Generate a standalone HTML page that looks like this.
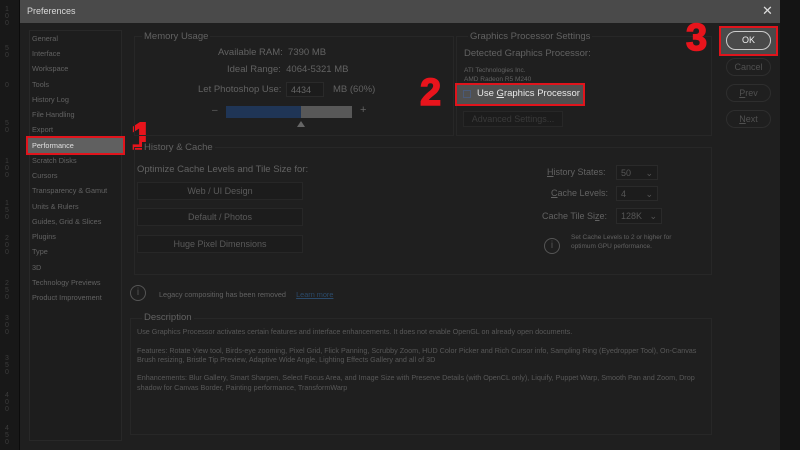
<!DOCTYPE html>
<html><head><style>
*{margin:0;padding:0;box-sizing:border-box}
body{width:800px;height:450px;background:#141414;font-family:"Liberation Sans",sans-serif;position:relative;overflow:hidden;color:#626262;font-size:8px}
.a{position:absolute}
.ruler{left:0;top:0;width:20px;height:450px;background:#181818;border-right:1px solid #0c0c0c}
.ruler span{position:absolute;left:4px;font-size:7px;color:#3c3c3c;line-height:7px;width:6px;text-align:center}
.dlg{left:20px;top:0;width:760px;height:450px;background:#1f1f1f}
.title{left:20px;top:0;width:760px;height:23px;background:#4a4a4a;color:#d8d8d8;font-size:9px;padding:6px 7px}
.side{left:29px;top:30px;width:93px;height:411px;border:1px solid #282828;background:#1d1d1d}
.item{position:absolute;left:32px;font-size:7.3px;color:#626262}
.grp{border:1px solid #272727}
.btn{background:#1c1c1c;border:1px solid #272727;color:#5a5a5a;font-size:9px;text-align:center}
.rb{border-radius:10px;border:1px solid #2e2e2e;color:#505050;font-size:9px;text-align:center;line-height:16px}
.red{border:2px solid #e0141c}
.num{color:#e8141c;font-weight:bold;font-size:38px;font-family:"Liberation Sans",sans-serif;-webkit-text-stroke:1.5px #e8141c}
.sel{background:#1c1c1c;border:1px solid #2a2a2a;color:#565656;font-size:9px;padding:2px 4px}
</style></head><body>
<div class="a ruler">
<span style="top:6px">1<br>0<br>0</span><span style="top:45px">5<br>0</span><span style="top:82px">0</span><span style="top:120px">5<br>0</span><span style="top:158px">1<br>0<br>0</span><span style="top:200px">1<br>5<br>0</span><span style="top:235px">2<br>0<br>0</span><span style="top:280px">2<br>5<br>0</span><span style="top:315px">3<br>0<br>0</span><span style="top:355px">3<br>5<br>0</span><span style="top:392px">4<br>0<br>0</span><span style="top:425px">4<br>5<br>0</span>
</div>
<div class="a dlg"></div>
<div class="a title">Preferences</div>
<div class="a" style="left:762px;top:3px;color:#ddd;font-size:13px">✕</div>
<div class="a side"></div>
<div class="item" style="top:34px">General</div>
<div class="item" style="top:49px">Interface</div>
<div class="item" style="top:64px">Workspace</div>
<div class="item" style="top:80px">Tools</div>
<div class="item" style="top:95px">History Log</div>
<div class="item" style="top:110px">File Handling</div>
<div class="item" style="top:125px">Export</div>
<div class="a red" style="left:26px;top:136px;width:99px;height:19px;background:#606060"></div>
<div class="item" style="top:141px;color:#e0e0e0">Performance</div>
<div class="item" style="top:156px">Scratch Disks</div>
<div class="item" style="top:171px">Cursors</div>
<div class="item" style="top:186px">Transparency &amp; Gamut</div>
<div class="item" style="top:202px">Units &amp; Rulers</div>
<div class="item" style="top:217px">Guides, Grid &amp; Slices</div>
<div class="item" style="top:232px">Plugins</div>
<div class="item" style="top:247px">Type</div>
<div class="item" style="top:263px">3D</div>
<div class="item" style="top:278px">Technology Previews</div>
<div class="item" style="top:293px">Product Improvement</div>
<div class="a num" style="left:131px;top:116px">1</div>

<div class="a grp" style="left:134px;top:36px;width:320px;height:100px"></div>
<div class="a" style="left:142px;top:31px;font-size:9.5px;background:#1f1f1f;padding:0 2px">Memory Usage</div>
<div class="a" style="left:218px;top:47px;font-size:9.5px">Available RAM:&nbsp;&nbsp;7390 MB</div>
<div class="a" style="left:227px;top:64px;font-size:9.5px">Ideal Range:&nbsp;&nbsp;4064-5321 MB</div>
<div class="a" style="left:198px;top:84px;font-size:9.5px">Let Photoshop Use:</div>
<div class="a sel" style="left:286px;top:82px;width:38px;height:15px;color:#666">4434</div>
<div class="a" style="left:333px;top:84px;font-size:9.5px">MB (60%)</div>
<div class="a" style="left:212px;top:105px;font-size:10px">–</div>
<div class="a" style="left:226px;top:106px;width:126px;height:12px;background:#585858"></div>
<div class="a" style="left:226px;top:106px;width:75px;height:12px;background:#1f3556"></div>
<div class="a" style="left:360px;top:104px;font-size:11px">+</div>
<div class="a" style="left:297px;top:121px;width:0;height:0;border-left:4px solid transparent;border-right:4px solid transparent;border-bottom:6px solid #666"></div>

<div class="a grp" style="left:456px;top:36px;width:256px;height:100px"></div>
<div class="a" style="left:468px;top:31px;font-size:9.5px;background:#1f1f1f;padding:0 2px">Graphics Processor Settings</div>
<div class="a" style="left:464px;top:48px;font-size:9.5px">Detected Graphics Processor:</div>
<div class="a" style="left:464px;top:66px;font-size:6.5px;line-height:9px">ATI Technologies Inc.<br>AMD Radeon R5 M240</div>
<div class="num a" style="left:420px;top:72px">2</div>
<div class="a red" style="left:455px;top:83px;width:130px;height:23px;background:#505050"></div>
<div class="a" style="left:463px;top:90px;width:8px;height:8px;border:1px solid #4a5a78"></div>
<div class="a" style="left:477px;top:88px;font-size:9.5px;color:#e8e8e8">Use <u>G</u>raphics Processor</div>
<div class="a btn" style="left:463px;top:111px;width:100px;height:16px;line-height:14px;color:#3a3a3a">Advanced Settings...</div>

<div class="a grp" style="left:134px;top:147px;width:578px;height:128px"></div>
<div class="a" style="left:142px;top:142px;font-size:9.5px;background:#1f1f1f;padding:0 2px">History &amp; Cache</div>
<div class="a" style="left:137px;top:164px;font-size:9.5px">Optimize Cache Levels and Tile Size for:</div>
<div class="a btn" style="left:137px;top:182px;width:166px;height:18px;line-height:16px">Web / UI Design</div>
<div class="a btn" style="left:137px;top:208px;width:166px;height:18px;line-height:16px">Default / Photos</div>
<div class="a btn" style="left:137px;top:235px;width:166px;height:18px;line-height:16px">Huge Pixel Dimensions</div>
<div class="a" style="left:547px;top:167px;font-size:9px"><u>H</u>istory States:</div>
<div class="a sel" style="left:616px;top:165px;width:42px;height:15px">50 <span style="float:right">⌄</span></div>
<div class="a" style="left:551px;top:188px;font-size:9px"><u>C</u>ache Levels:</div>
<div class="a sel" style="left:616px;top:186px;width:42px;height:15px">4 <span style="float:right">⌄</span></div>
<div class="a" style="left:542px;top:211px;font-size:9px">Cache Tile Si<u>z</u>e:</div>
<div class="a sel" style="left:616px;top:208px;width:46px;height:16px">128K <span style="float:right">⌄</span></div>
<div class="a" style="left:544px;top:238px;width:16px;height:16px;border:1.5px solid #555;border-radius:50%;text-align:center;font-size:10px;line-height:13px;color:#555">i</div>
<div class="a" style="left:571px;top:233px;font-size:6.5px;line-height:9px">Set Cache Levels to 2 or higher for<br>optimum GPU performance.</div>

<div class="a" style="left:130px;top:285px;width:16px;height:16px;border:1.5px solid #555;border-radius:50%;text-align:center;font-size:10px;line-height:13px;color:#555">i</div>
<div class="a" style="left:159px;top:290px;font-size:7.3px">Legacy compositing has been removed&nbsp;&nbsp;&nbsp;&nbsp;&nbsp;<u style="color:#2b4a6a">Learn more</u></div>

<div class="a grp" style="left:130px;top:318px;width:582px;height:117px"></div>
<div class="a" style="left:142px;top:312px;font-size:9.5px;background:#1f1f1f;padding:0 2px">Description</div>
<div class="a" style="left:137px;top:327px;font-size:7.2px;line-height:9.3px;color:#585858;width:570px">Use Graphics Processor activates certain features and interface enhancements. It does not enable OpenGL on already open documents.<br><br>Features: Rotate View tool, Birds-eye zooming, Pixel Grid, Flick Panning, Scrubby Zoom, HUD Color Picker and Rich Cursor info, Sampling Ring (Eyedropper Tool), On-Canvas Brush resizing, Bristle Tip Preview, Adaptive Wide Angle, Lighting Effects Gallery and all of 3D<br><br>Enhancements: Blur Gallery, Smart Sharpen, Select Focus Area, and Image Size with Preserve Details (with OpenCL only), Liquify, Puppet Warp, Smooth Pan and Zoom, Drop shadow for Canvas Border, Painting performance, TransformWarp</div>

<div class="num a" style="left:686px;top:17px">3</div>
<div class="a red" style="left:719px;top:26px;width:59px;height:30px;background:#4a4a4a"></div>
<div class="a rb" style="left:726px;top:31px;width:45px;height:19px;border:1.5px solid #ccc;color:#eee;line-height:16px">OK</div>
<div class="a rb" style="left:726px;top:58px;width:45px;height:18px">Cancel</div>
<div class="a rb" style="left:726px;top:84px;width:45px;height:18px"><u>P</u>rev</div>
<div class="a rb" style="left:726px;top:110px;width:45px;height:18px"><u>N</u>ext</div>
</body></html>
